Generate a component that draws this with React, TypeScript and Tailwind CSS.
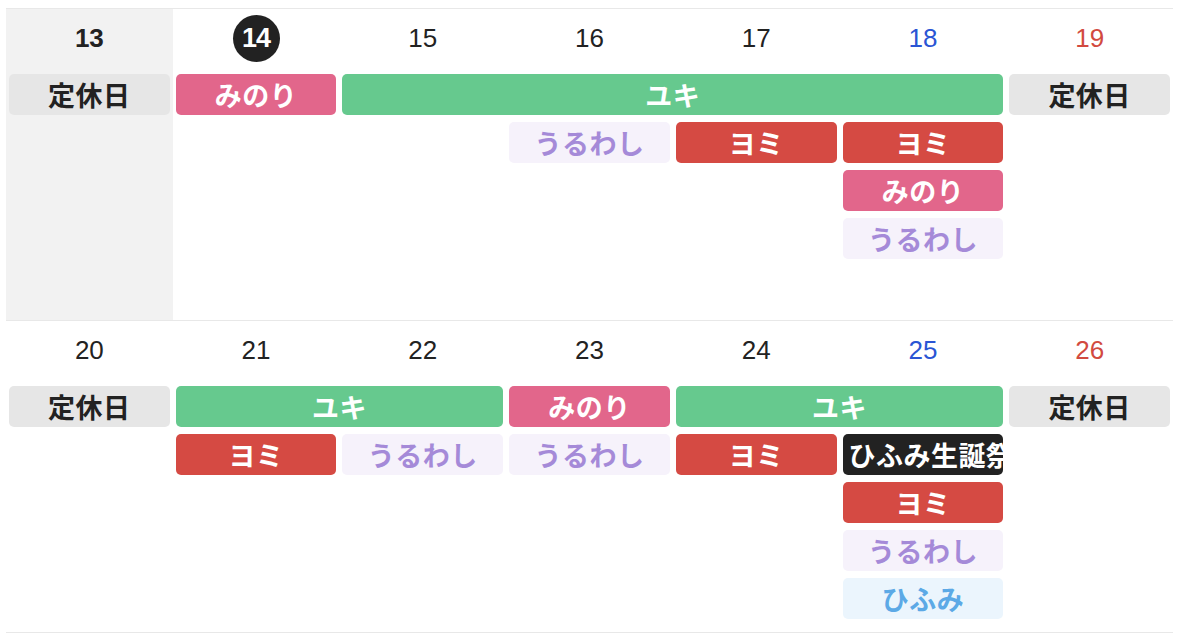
import React from "react";

type Ev = { label: string; col: number; span?: number; row: number; kind: string };

const kindCls: Record<string, string> = {
  off: "bg-[#e6e6e6] text-[#222222]",
  minori: "bg-[#e2668b] text-white",
  yuki: "bg-[#66c98e] text-white",
  yomi: "bg-[#d54a43] text-white",
  uru: "bg-[#f6f2fb] text-[#a58ad8]",
  hifumi: "bg-[#ebf5fd] text-[#5ca9e6]",
  black: "bg-[#222222] text-white",
};

const colStart: Record<number, string> = {
  1: "col-start-1",
  2: "col-start-2",
  3: "col-start-3",
  4: "col-start-4",
  5: "col-start-5",
  6: "col-start-6",
  7: "col-start-7",
};
const colSpan: Record<number, string> = {
  1: "col-span-1",
  2: "col-span-2",
  3: "col-span-3",
  4: "col-span-4",
};
const rowStart: Record<number, string> = {
  1: "row-start-2",
  2: "row-start-3",
  3: "row-start-4",
  4: "row-start-5",
  5: "row-start-6",
};

type Day = { n: number; color: string; bold?: boolean; today?: boolean };

const weeks: { days: Day[]; gray: boolean; events: Ev[] }[] = [
  {
    gray: true,
    days: [
      { n: 13, color: "text-[#222222]", bold: true },
      { n: 14, color: "text-white", today: true },
      { n: 15, color: "text-[#222222]" },
      { n: 16, color: "text-[#222222]" },
      { n: 17, color: "text-[#222222]" },
      { n: 18, color: "text-[#2a55d4]" },
      { n: 19, color: "text-[#d24a40]" },
    ],
    events: [
      { label: "定休日", col: 1, row: 1, kind: "off" },
      { label: "みのり", col: 2, row: 1, kind: "minori" },
      { label: "ユキ", col: 3, span: 4, row: 1, kind: "yuki" },
      { label: "定休日", col: 7, row: 1, kind: "off" },
      { label: "うるわし", col: 4, row: 2, kind: "uru" },
      { label: "ヨミ", col: 5, row: 2, kind: "yomi" },
      { label: "ヨミ", col: 6, row: 2, kind: "yomi" },
      { label: "みのり", col: 6, row: 3, kind: "minori" },
      { label: "うるわし", col: 6, row: 4, kind: "uru" },
    ],
  },
  {
    gray: false,
    days: [
      { n: 20, color: "text-[#222222]" },
      { n: 21, color: "text-[#222222]" },
      { n: 22, color: "text-[#222222]" },
      { n: 23, color: "text-[#222222]" },
      { n: 24, color: "text-[#222222]" },
      { n: 25, color: "text-[#2a55d4]" },
      { n: 26, color: "text-[#d24a40]" },
    ],
    events: [
      { label: "定休日", col: 1, row: 1, kind: "off" },
      { label: "ユキ", col: 2, span: 2, row: 1, kind: "yuki" },
      { label: "みのり", col: 4, row: 1, kind: "minori" },
      { label: "ユキ", col: 5, span: 2, row: 1, kind: "yuki" },
      { label: "定休日", col: 7, row: 1, kind: "off" },
      { label: "ヨミ", col: 2, row: 2, kind: "yomi" },
      { label: "うるわし", col: 3, row: 2, kind: "uru" },
      { label: "うるわし", col: 4, row: 2, kind: "uru" },
      { label: "ヨミ", col: 5, row: 2, kind: "yomi" },
      { label: "ひふみ生誕祭", col: 6, row: 2, kind: "black" },
      { label: "ヨミ", col: 6, row: 3, kind: "yomi" },
      { label: "うるわし", col: 6, row: 4, kind: "uru" },
      { label: "ひふみ", col: 6, row: 5, kind: "hifumi" },
    ],
  },
];

export default function App() {
  return (
    <div className="w-[1179px] h-[642px] bg-white pt-[8px] pl-[6px] font-['Noto_Sans_CJK_JP',sans-serif]">
      <div className="w-[1167px] border-b border-[#e8e8e8]">
        {weeks.map((w, wi) => (
          <div
            key={wi}
            className="h-[312px] border-t border-[#e8e8e8] grid grid-cols-7 grid-rows-[58px_41px_41px_41px_41px_41px_1fr] gap-y-[7px]"
          >
            {w.gray && <div className="col-start-1 row-span-full bg-[#f2f2f2]" />}
            {w.days.map((d, i) => (
              <div
                key={d.n}
                className={`${colStart[i + 1]} row-start-1 flex items-center justify-center font-['Liberation_Sans',sans-serif] text-[26px] ${d.color} ${d.bold ? "font-bold" : ""}`}
              >
                {d.today ? (
                  <span className="w-[47px] h-[47px] rounded-full bg-[#222222] flex items-center justify-center font-bold text-[27px] tracking-[-1px]">
                    {d.n}
                  </span>
                ) : (
                  d.n
                )}
              </div>
            ))}
            {w.events.map((e, i) => (
              <div
                key={i}
                className={`${colStart[e.col]} ${colSpan[e.span ?? 1]} ${rowStart[e.row]} mx-[3px] rounded-[5px] overflow-hidden whitespace-nowrap flex items-center ${
                  e.kind === "black" ? "justify-start pl-[6px]" : "justify-center"
                } text-[27px] font-bold leading-none tracking-[0.5px] ${kindCls[e.kind]}`}
              >
                {e.label}
              </div>
            ))}
          </div>
        ))}
      </div>
    </div>
  );
}
